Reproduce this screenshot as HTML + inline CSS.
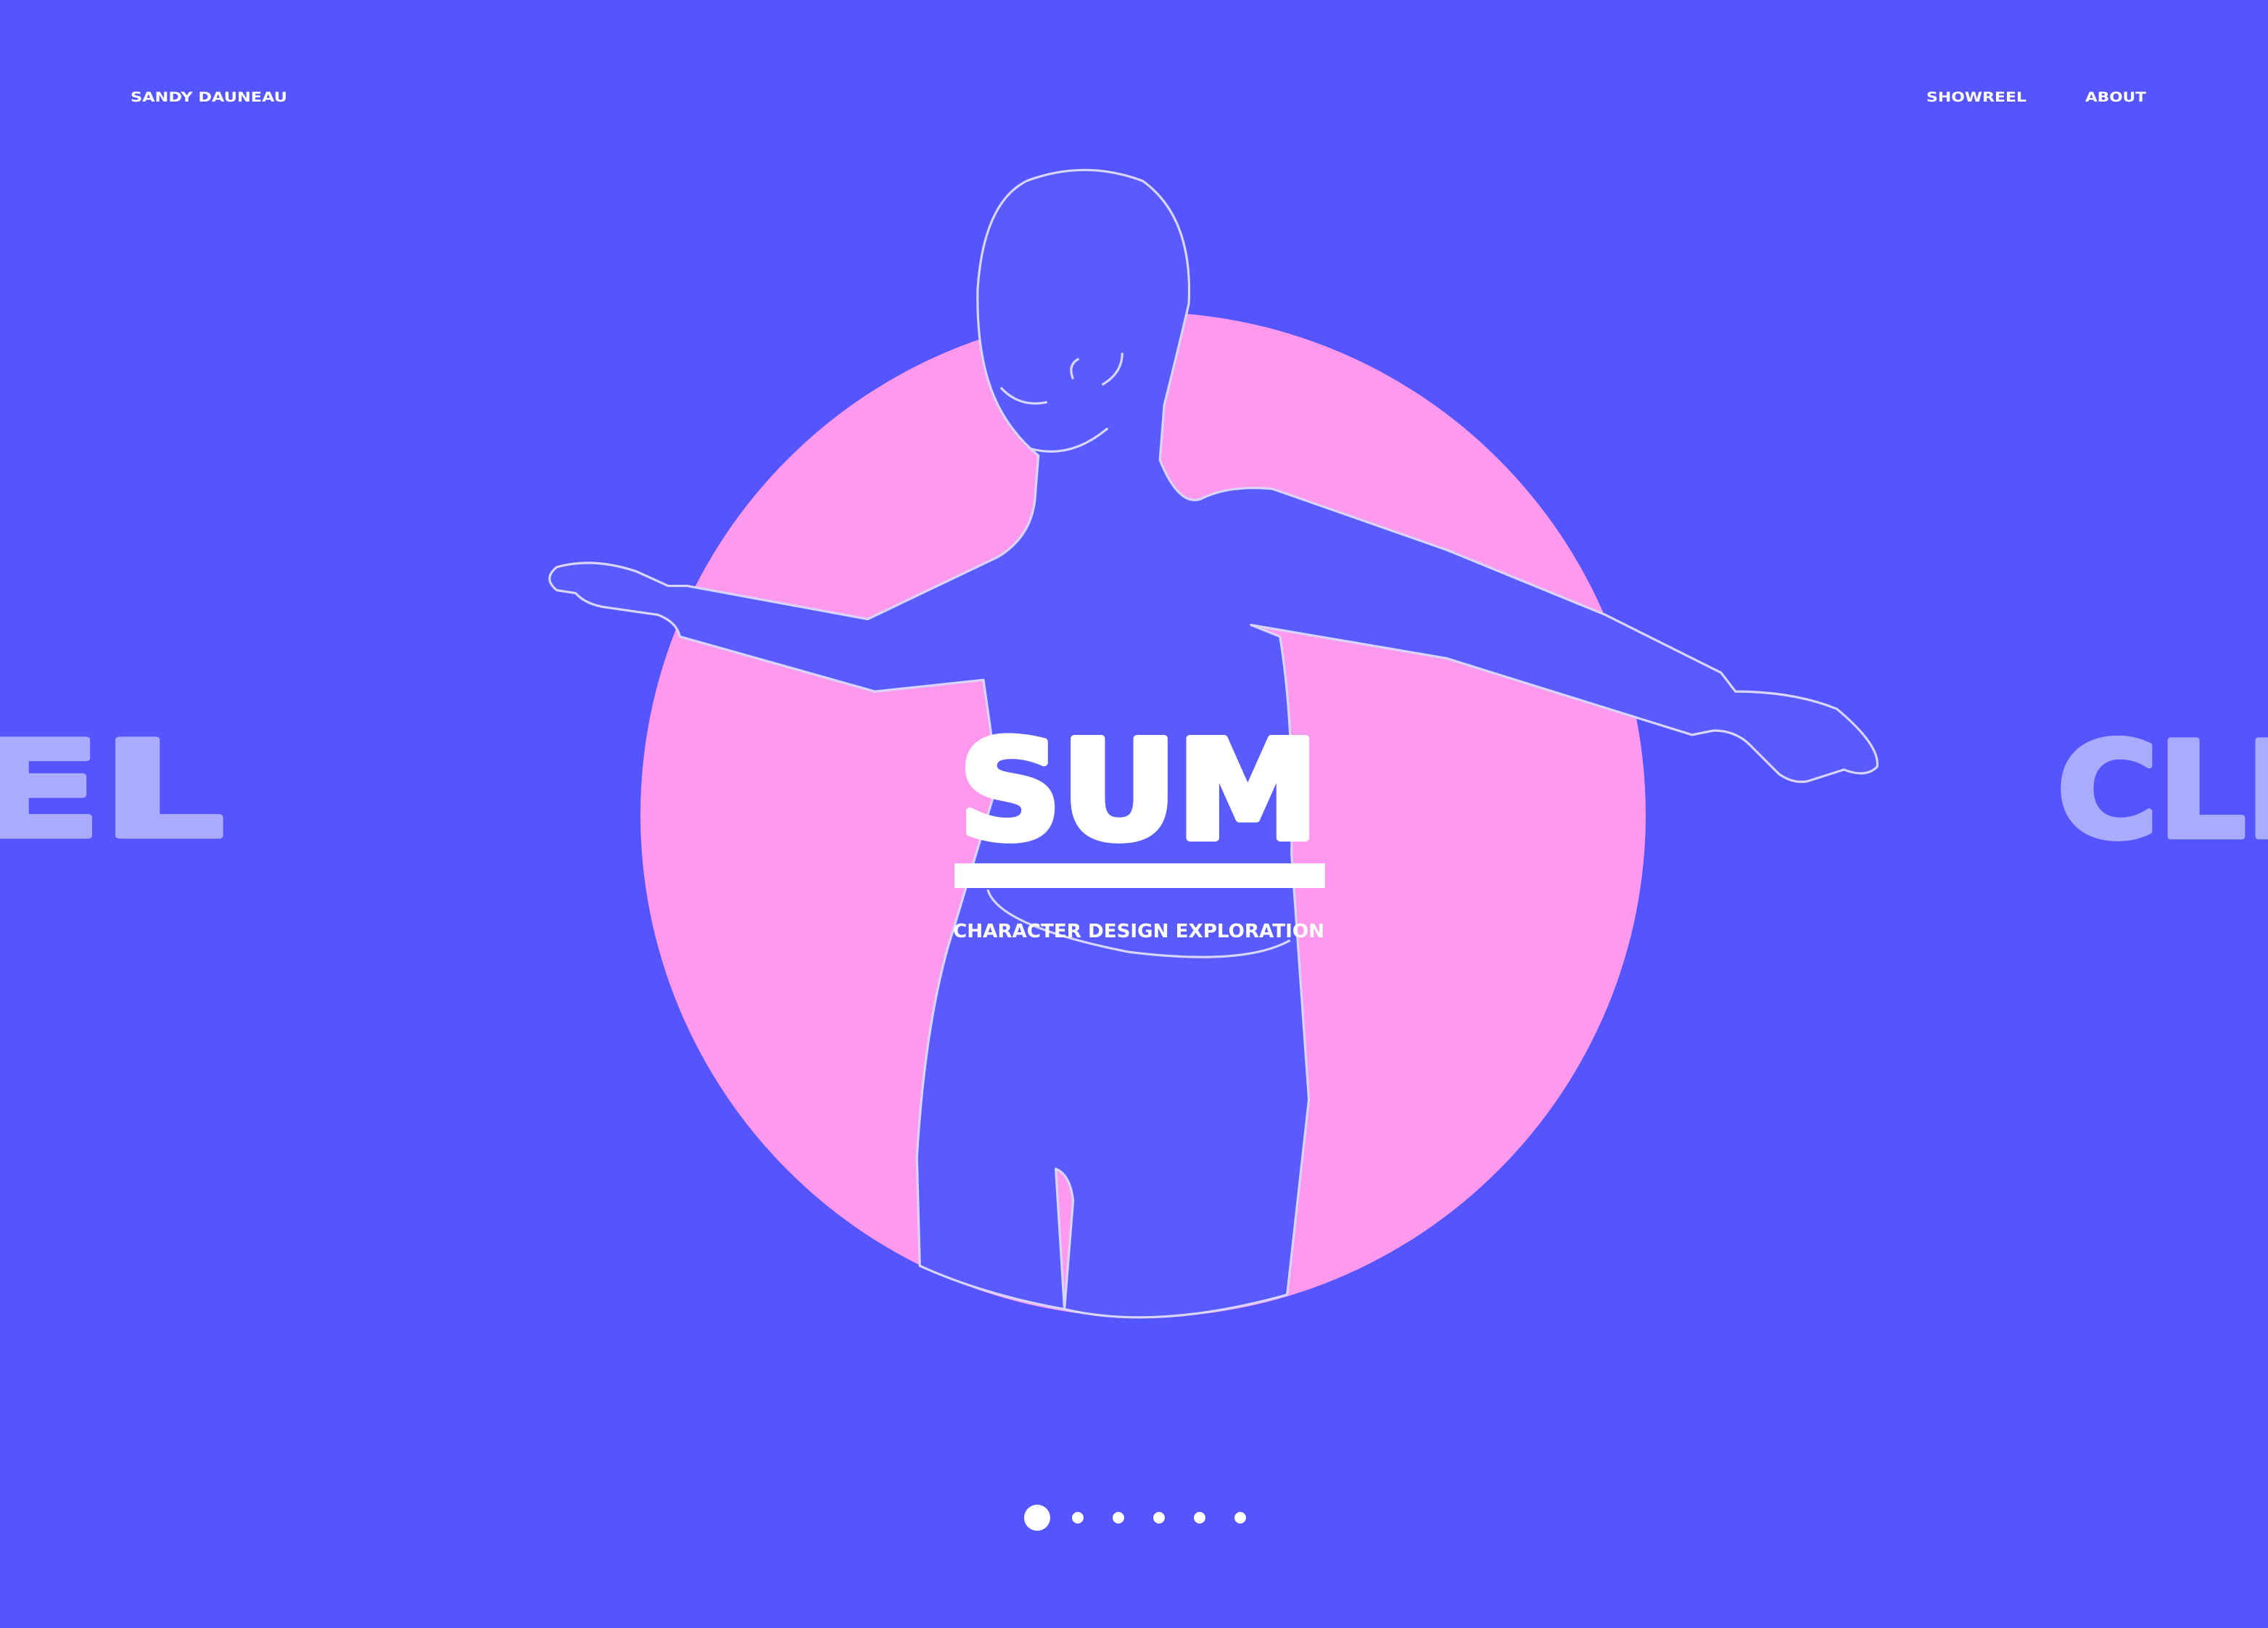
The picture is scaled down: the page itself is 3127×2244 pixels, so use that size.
<!DOCTYPE html>
<html><head><meta charset="utf-8"><style>
html,body{margin:0;padding:0;background:#5555ff;overflow:hidden}
svg{display:block}
</style></head><body>
<svg width="3127" height="2244" viewBox="0 0 3127 2244" xmlns="http://www.w3.org/2000/svg">
<rect width="3127" height="2244" fill="#5555ff"/>
<circle cx="1576" cy="1123" r="693" fill="#ff99ee"/>
<g transform="scale(1.994)">
<path d="M636 875 L634 800 Q640 700 660 640 L690 540 L680 470 L605 478 L470 440 Q468 430 455 425 L420 420 Q405 418 398 410 L385 408 Q375 400 385 392 Q410 385 440 395 L462 405 L475 405 L600 428 L690 385 Q715 370 716 340 L718 315 Q700 300 690 280 Q675 250 676 200 Q680 140 710 125 Q750 110 790 125 Q825 150 822 210 Q815 240 805 280 L802 318 Q815 350 830 345 Q850 335 880 338 L1000 380 L1110 425 L1190 465 L1200 478 Q1240 478 1270 490 Q1300 515 1298 530 Q1290 538 1275 532 L1250 540 Q1240 542 1230 535 L1210 515 Q1200 505 1185 505 L1170 508 L1000 455 L865 432 L885 440 Q895 500 893 590 L905 760 L890 895 Q800 920 736 905 L742 830 Q740 812 730 808 L736 905 Q680 895 636 875 Z" fill="#5a5bff" stroke="#d8d6ff" stroke-width="1.6" stroke-linejoin="round"/>
<path d="M683 615 Q690 640 780 658 Q860 668 892 650" fill="none" stroke="#d8d6ff" stroke-width="1.6"/>
<path d="M692 268 Q705 282 724 278 M712 310 Q740 318 766 296 M742 262 Q738 252 746 248 M762 266 Q776 258 776 244" fill="none" stroke="#d8d6ff" stroke-width="1.6"/>
</g>
<g font-family="'DejaVu Sans','Liberation Sans',sans-serif" font-weight="bold" fill="#ffffff">
<text x="180" y="140" font-size="19" textLength="216" lengthAdjust="spacingAndGlyphs">SANDY DAUNEAU</text>
<text x="2656" y="140" font-size="19" textLength="138" lengthAdjust="spacingAndGlyphs">SHOWREEL</text>
<text x="2875" y="140" font-size="19" textLength="84" lengthAdjust="spacingAndGlyphs">ABOUT</text>
<text x="1322" y="1155" font-size="188" textLength="496" lengthAdjust="spacingAndGlyphs" stroke="#ffffff" stroke-width="10" stroke-linejoin="round">SUM</text>
<rect x="1316" y="1190" width="511" height="34"/>
<text x="1314" y="1292" font-size="26" textLength="512" lengthAdjust="spacingAndGlyphs">CHARACTER DESIGN EXPLORATION</text>
</g>
<g font-family="'DejaVu Sans','Liberation Sans',sans-serif" font-weight="bold" fill="#aaaaff" stroke="#aaaaff" stroke-width="8" stroke-linejoin="round">
<text x="-40" y="1152" font-size="182" textLength="349" lengthAdjust="spacingAndGlyphs">EL</text>
<text x="2836" y="1153" font-size="182" textLength="390" lengthAdjust="spacingAndGlyphs">CLÉ</text>
</g>
<g fill="#ffffff">
<circle cx="1430" cy="2092" r="18"/>
<circle cx="1486" cy="2092" r="8"/>
<circle cx="1542" cy="2092" r="8"/>
<circle cx="1598" cy="2092" r="8"/>
<circle cx="1654" cy="2092" r="8"/>
<circle cx="1710" cy="2092" r="8"/>
</g>
</svg>
</body></html>
